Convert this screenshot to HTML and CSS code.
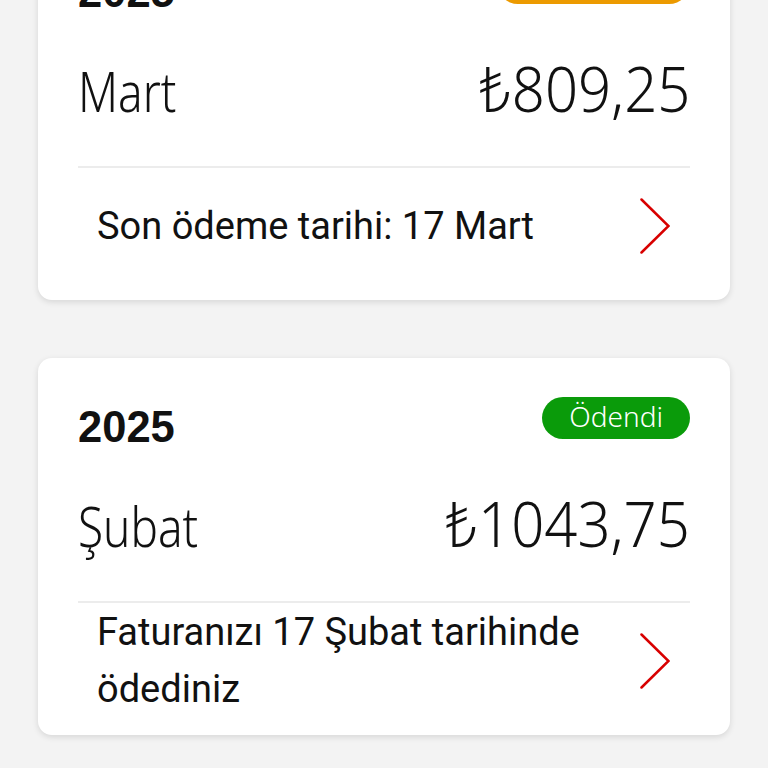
FILE: index.html
```html
<!DOCTYPE html>
<html lang="tr">
<head>
<meta charset="utf-8">
<title>Faturalar</title>
<link rel="stylesheet" href="styles.css">
</head>
<body>
<main class="list">
  <section class="card">
    <div class="card-head">
      <span class="year">2025</span>
      <span class="badge badge-due">Ödenmedi</span>
    </div>
    <div class="card-main">
      <span class="month">Mart</span>
      <span class="amount">₺809,25</span>
    </div>
    <div class="card-foot">
      <p class="foot-text">Son ödeme tarihi: 17 Mart</p>
      <svg class="chev" viewBox="0 0 30 56" aria-hidden="true"><polyline points="1.5,1.5 28.5,28 1.5,54.5"/></svg>
    </div>
  </section>
  <section class="card">
    <div class="card-head">
      <span class="year">2025</span>
      <span class="badge badge-paid">Ödendi</span>
    </div>
    <div class="card-main">
      <span class="month">Şubat</span>
      <span class="amount">₺1043,75</span>
    </div>
    <div class="card-foot">
      <p class="foot-text">Faturanızı 17 Şubat tarihinde ödediniz</p>
      <svg class="chev" viewBox="0 0 30 56" aria-hidden="true"><polyline points="1.5,1.5 28.5,28 1.5,54.5"/></svg>
    </div>
  </section>
</main>
</body>
</html>
```
FILE: styles.css
```css
html, body {
  margin: 0;
  padding: 0;
  background: #f3f3f3;
}
body {
  overflow: hidden;
  height: 768px;
  font-family: Roboto, "Liberation Sans", sans-serif;
  color: #111;
}
.list {
  display: flex;
  flex-direction: column;
  gap: 58px;
  margin-top: -77px;
  padding: 0 38px;
}
.card {
  background: #fff;
  border-radius: 14px;
  box-shadow: 0 2px 6px rgba(0, 0, 0, 0.12);
  padding: 39px 40px 16px;
}
.card-head {
  display: flex;
  justify-content: space-between;
  align-items: flex-start;
  height: 41px;
}
.year {
  font-family: "Liberation Sans", Arial, sans-serif;
  font-weight: 700;
  font-size: 43.5px;
  line-height: 44px;
  margin-top: 8px;
  color: #111;
}
.badge {
  box-sizing: border-box;
  height: 42px;
  border-radius: 21px;
  color: #fff;
  font-family: "Noto Sans", Roboto, sans-serif;
  font-weight: 300;
  font-size: 28px;
  line-height: 38px;
  padding: 0 27px;
}
.badge-paid { background: #0a9b0a; }
.badge-due { background: #ec9a00; width: 193px; }
.card-main {
  display: flex;
  justify-content: space-between;
  align-items: baseline;
  margin-top: 55px;
  height: 60px;
  font-family: "Noto Sans", Roboto, sans-serif;
  font-weight: 300;
  line-height: 60px;
  color: #111;
}
.month {
  display: inline-block;
  font-size: 56px;
  transform: scaleX(0.82);
  transform-origin: left center;
}
.amount {
  display: inline-block;
  font-size: 62px;
  transform: scaleX(0.935);
  transform-origin: right center;
}
.card-foot {
  margin-top: 48px;
  border-top: 2px solid #ececec;
  height: 118px;
  box-sizing: border-box;
  display: flex;
  align-items: center;
  justify-content: space-between;
  padding: 0 20px 0 19px;
}
.foot-text {
  margin: 0;
  max-width: 520px;
  font-size: 38px;
  line-height: 57px;
  color: #111;
}
.chev {
  width: 30px;
  height: 56px;
  flex: none;
}
.chev polyline {
  fill: none;
  stroke: #d80000;
  stroke-width: 2.5;
  stroke-linecap: round;
  stroke-linejoin: miter;
}
```
